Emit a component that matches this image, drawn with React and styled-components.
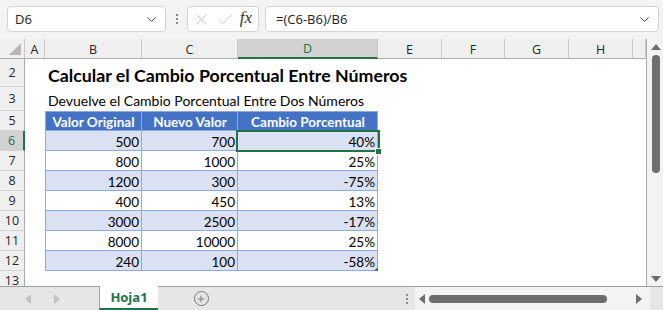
import React from "react";
import styled, { createGlobalStyle } from "styled-components";
import { ChevronDown, X, Check, Plus } from "lucide-react";

const GREEN = "#217346";
const TABLE_LINE = "#8ea9db";

const columns = [
  { name: "", width: 25 },
  { name: "A", width: 20 },
  { name: "B", width: 97 },
  { name: "C", width: 96 },
  { name: "D", width: 140 },
  { name: "E", width: 64 },
  { name: "F", width: 63 },
  { name: "G", width: 64 },
  { name: "H", width: 64 },
  { name: "", width: 13 },
];

const data = [
  [500, 700, "40%"],
  [800, 1000, "25%"],
  [1200, 300, "-75%"],
  [400, 450, "13%"],
  [3000, 2500, "-17%"],
  [8000, 10000, "25%"],
  [240, 100, "-58%"],
];

const GlobalStyle = createGlobalStyle`
  body {
    margin: 0;
    background: #f3f3f3;
    font-family: "Open Sans", "Noto Sans", sans-serif;
  }
`;

const Window = styled.div`
  width: 663px;
  height: 310px;
  display: flex;
  flex-direction: column;
  overflow: hidden;
  background: #f3f3f3;
`;

/* ---------- formula bar ---------- */
const FormulaBar = styled.div`
  height: 39px;
  flex: none;
  display: flex;
  align-items: flex-start;
  padding: 6px 4px 0 7px;
  box-sizing: border-box;
`;

const Field = styled.div`
  height: 26px;
  box-sizing: border-box;
  background: #fff;
  border: 1px solid #d4d4d4;
  border-radius: 4px;
  display: flex;
  align-items: center;
  font-size: 13px;
  color: #222;
`;

const NameBox = styled(Field)`
  width: 159px;
  padding: 0 6px 0 7px;
  justify-content: space-between;
`;

const FxBox = styled(Field)`
  width: 72px;
  padding: 0 6px 0 4px;
  justify-content: space-between;
  color: #c4c4c4;
`;

const FormulaInput = styled(Field)`
  flex: 1;
  padding: 0 6px 0 10px;
  justify-content: space-between;
`;

const Grip = styled.div`
  width: 21px;
  height: 26px;
  display: flex;
  flex-direction: column;
  align-items: center;
  justify-content: center;
  gap: 2px;
  span {
    width: 2px;
    height: 2px;
    background: #8a8a8a;
  }
`;

const FxLabel = styled.span`
  font-family: "Liberation Serif", serif;
  font-style: italic;
  font-size: 17px;
  color: #333;
  margin-top: -3px;
`;

const Gap = styled.div`
  width: ${(p) => p.$w}px;
`;

/* ---------- sheet ---------- */
const Main = styled.div`
  flex: 1;
  display: flex;
  min-height: 0;
`;

const Sheet = styled.div`
  width: 646px;
  display: grid;
  grid-template-columns: ${columns.map((c) => c.width + "px").join(" ")};
  grid-template-rows: 20px 28px 24px repeat(9, 20px);
  align-content: start;
  overflow: hidden;
  background: #fff;
  border-right: 1px solid #ababab;
  font-family: Lato, "Liberation Sans", sans-serif;
`;

const Corner = styled.div`
  background: #efefef;
  border-right: 1px solid #c8c8c8;
  border-bottom: 1px solid #ababab;
  position: relative;
  &::after {
    content: "";
    position: absolute;
    right: 3px;
    bottom: 3px;
    border-style: solid;
    border-width: 0 0 12px 12px;
    border-color: transparent transparent #b8b8b8 transparent;
  }
`;

const ColHead = styled.div`
  background: ${(p) => (p.$active ? "#d2d2d2" : "#efefef")};
  color: ${(p) => (p.$active ? GREEN : "#262626")};
  border-right: 1px solid #c8c8c8;
  border-bottom: ${(p) => (p.$active ? `2px solid ${GREEN}` : "1px solid #ababab")};
  font-family: "Open Sans", sans-serif;
  font-size: 12.5px;
  display: flex;
  align-items: center;
  justify-content: center;
  padding-top: 1px;
  box-sizing: border-box;
`;

const RowHead = styled.div`
  background: ${(p) => (p.$active ? "#d2d2d2" : "#efefef")};
  color: ${(p) => (p.$active ? GREEN : "#262626")};
  border-right: ${(p) => (p.$active ? `2px solid ${GREEN}` : "1px solid #ababab")};
  border-bottom: 1px solid #d4d4d4;
  font-family: "Open Sans", sans-serif;
  font-size: 12.5px;
  display: flex;
  align-items: center;
  justify-content: center;
  box-sizing: border-box;
  overflow: hidden;
`;

const Cell = styled.div`
  position: relative;
  display: flex;
  align-items: center;
  justify-content: ${(p) => (p.$align === "right" ? "flex-end" : p.$align === "center" ? "center" : "flex-start")};
  padding: 1px 3px 0 3px;
  box-sizing: border-box;
  white-space: nowrap;
  font-size: 13.5px;
  color: ${(p) => p.$color || "#000"};
  font-weight: ${(p) => (p.$bold ? 700 : 400)};
  background: ${(p) => p.$bg || "transparent"};
  box-shadow: ${(p) => p.$lines || "none"};
  z-index: ${(p) => (p.$selected ? 2 : 0)};

  ${(p) =>
    p.$selected &&
    `
    &::after {
      content: "";
      position: absolute;
      left: -2px;
      top: -1px;
      right: -2px;
      bottom: -1px;
      border: 2px solid ${GREEN};
    }
    &::before {
      content: "";
      position: absolute;
      right: -4px;
      bottom: -4px;
      width: 5px;
      height: 5px;
      background: ${GREEN};
      border: 1px solid #fff;
      z-index: 3;
    }
  `}
`;

const Title = styled(Cell)`
  font-size: 17.8px;
  font-weight: 700;
  overflow: visible;
  padding-top: 4px;
`;

const Subtitle = styled(Cell)`
  font-size: 14px;
  overflow: visible;
  padding-top: 2px;
`;

const ResizeMark = styled.span`
  position: absolute;
  right: 0;
  bottom: 0;
  border-style: solid;
  border-width: 0 0 4px 4px;
  border-color: transparent transparent #3b5ea8 transparent;
`;

/* ---------- scroll bars ---------- */
const VScroll = styled.div`
  flex: 1;
  display: flex;
  flex-direction: column;
  align-items: center;
  padding: 5px 0 4px 2px;
  box-sizing: border-box;
  background: #f3f3f3;
`;

const Arrow = styled.span`
  width: 0;
  height: 0;
  border-style: solid;
  border-color: transparent;
  ${(p) => p.$dir === "up" && `border-width: 0 5px 6px 5px; border-bottom-color: ${p.$c || "#6e6e6e"};`}
  ${(p) => p.$dir === "down" && `border-width: 6px 5px 0 5px; border-top-color: ${p.$c || "#6e6e6e"};`}
  ${(p) => p.$dir === "left" && `border-width: 5px 6px 5px 0; border-right-color: ${p.$c || "#6e6e6e"};`}
  ${(p) => p.$dir === "right" && `border-width: 5px 0 5px 6px; border-left-color: ${p.$c || "#6e6e6e"};`}
`;

const VThumb = styled.div`
  width: 8px;
  height: 118px;
  margin-top: 5px;
  border-radius: 4px;
  background: #6e6e6e;
`;

const Spacer = styled.div`
  flex: 1;
`;

/* ---------- tabs ---------- */
const TabBar = styled.div`
  height: 24px;
  flex: none;
  display: flex;
  align-items: stretch;
  background: #e6e6e6;
  border-top: 1px solid #a0a0a0;
  box-sizing: border-box;
`;

const NavArrows = styled.div`
  width: 99px;
  display: flex;
  align-items: center;
  gap: 23px;
  padding-left: 25px;
  box-sizing: border-box;
`;

const Tab = styled.div`
  width: 59px;
  margin-top: -1px;
  background: #fff;
  border-left: 1px solid #a0a0a0;
  border-bottom: 2px solid ${GREEN};
  box-sizing: border-box;
  display: flex;
  align-items: center;
  justify-content: center;
  color: ${GREEN};
  font-family: "Open Sans", sans-serif;
  font-weight: 700;
  font-size: 13px;
`;

const AddButton = styled.div`
  width: 86px;
  display: flex;
  align-items: center;
  justify-content: center;
`;

const AddCircle = styled.div`
  width: 13px;
  height: 13px;
  border: 1.5px solid #7a7a7a;
  border-radius: 50%;
  display: flex;
  align-items: center;
  justify-content: center;
  color: #7a7a7a;
`;

const TabGrip = styled(Grip)`
  margin-left: auto;
  height: 23px;
  width: 16px;
`;

const HScroll = styled.div`
  width: 235px;
  display: flex;
  align-items: center;
  padding: 0 8px 0 4px;
  box-sizing: border-box;
  background: #f3f3f3;
`;

const HThumb = styled.div`
  width: 178px;
  height: 8px;
  margin-left: 4px;
  border-radius: 4px;
  background: #6e6e6e;
`;

const CornerBox = styled.div`
  width: 13px;
  background: #e6e6e6;
`;

function renderRow(rowNum, active, cells) {
  return [
    <RowHead key={`h${rowNum}`} $active={active}>
      {rowNum}
    </RowHead>,
    ...cells,
  ];
}

function blanks(prefix, from, to) {
  const out = [];
  for (let i = from; i < to; i++) out.push(<Cell key={`${prefix}-${i}`} />);
  return out;
}

export default function App() {
  const rows = [];

  rows.push(
    ...renderRow(2, false, [
      <Cell key="2a" />,
      <Title key="2b">Calcular el Cambio Porcentual Entre Números</Title>,
      ...blanks("r2", 3, 10),
    ])
  );
  rows.push(
    ...renderRow(3, false, [
      <Cell key="3a" />,
      <Subtitle key="3b">Devuelve el Cambio Porcentual Entre Dos Números</Subtitle>,
      ...blanks("r3", 3, 10),
    ])
  );

  const headers = ["Valor Original", "Nuevo Valor", "Cambio Porcentual"];
  rows.push(
    ...renderRow(5, false, [
      <Cell key="5a" />,
      ...headers.map((h, i) => (
        <Cell
          key={h}
          $align="center"
          $bold
          $color="#fff"
          $bg="#4472c4"
          $lines={`inset -1px -1px 0 ${TABLE_LINE}, inset 0 1px 0 ${TABLE_LINE}${i === 0 ? `, inset 1px 0 0 ${TABLE_LINE}` : ""}`}
        >
          {h}
        </Cell>
      )),
      ...blanks("r5", 5, 10),
    ])
  );

  data.forEach((d, idx) => {
    const rowNum = 6 + idx;
    const bg = idx % 2 === 0 ? "#d9e1f2" : "#fff";
    rows.push(
      ...renderRow(rowNum, idx === 0, [
        <Cell key={`${rowNum}a`} />,
        ...d.map((v, i) => (
          <Cell
            key={`${rowNum}-${i}`}
            $align="right"
            $bg={bg}
            $selected={idx === 0 && i === 2}
            $lines={`inset -1px -1px 0 ${TABLE_LINE}${i === 0 ? `, inset 1px 0 0 ${TABLE_LINE}` : ""}`}
          >
            {v}
            {idx === data.length - 1 && i === 2 && <ResizeMark />}
          </Cell>
        )),
        ...blanks(`r${rowNum}`, 5, 10),
      ])
    );
  });

  rows.push(...renderRow(13, false, blanks("r13", 1, 10)));

  return (
    <Window>
      <GlobalStyle />
      <FormulaBar>
        <NameBox>
          <span>D6</span>
          <ChevronDown size={15} color="#444" strokeWidth={1.6} />
        </NameBox>
        <Grip>
          <span />
          <span />
          <span />
        </Grip>
        <FxBox>
          <X size={19} strokeWidth={1.1} />
          <Check size={19} strokeWidth={1.1} />
          <FxLabel>fx</FxLabel>
        </FxBox>
        <Gap $w={6} />
        <FormulaInput>
          <span>=(C6-B6)/B6</span>
          <ChevronDown size={15} color="#444" strokeWidth={1.6} />
        </FormulaInput>
      </FormulaBar>

      <Main>
        <Sheet>
          <Corner />
          {columns.slice(1).map((c, i) => (
            <ColHead key={i} $active={c.name === "D"}>
              {c.name}
            </ColHead>
          ))}
          {rows}
        </Sheet>
        <VScroll>
          <Arrow $dir="up" />
          <VThumb />
          <Spacer />
          <Arrow $dir="down" />
        </VScroll>
      </Main>

      <TabBar>
        <NavArrows>
          <Arrow $dir="left" $c="#c2c2c2" />
          <Arrow $dir="right" $c="#c2c2c2" />
        </NavArrows>
        <Tab>Hoja1</Tab>
        <AddButton>
          <AddCircle>
            <Plus size={10} strokeWidth={2.4} />
          </AddCircle>
        </AddButton>
        <TabGrip>
          <span />
          <span />
          <span />
        </TabGrip>
        <HScroll>
          <Arrow $dir="left" />
          <HThumb />
          <Spacer />
          <Arrow $dir="right" />
        </HScroll>
        <CornerBox />
      </TabBar>
    </Window>
  );
}
